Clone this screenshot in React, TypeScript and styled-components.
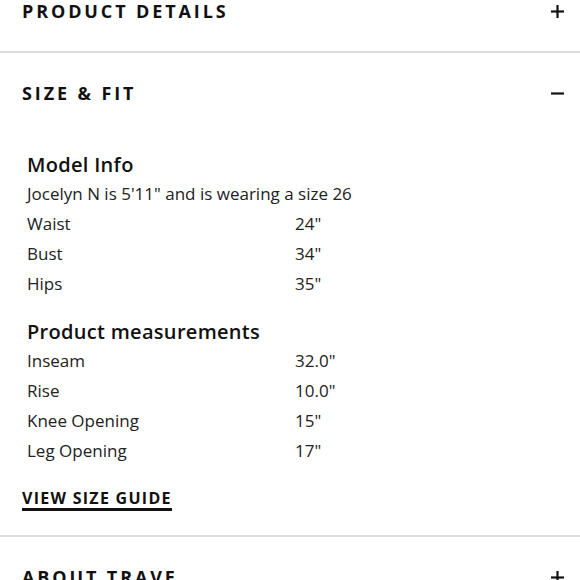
import React, { useState } from "react";
import styled, { createGlobalStyle } from "styled-components";

const GlobalStyle = createGlobalStyle`
  body {
    margin: 0;
    background: #ffffff;
    font-family: "Open Sans", "Liberation Sans", sans-serif;
    color: #111111;
  }
`;

type Row = { label: string; value: string };

const modelRows: Row[] = [
  { label: "Waist", value: "24\"" },
  { label: "Bust", value: "34\"" },
  { label: "Hips", value: "35\"" },
];

const productRows: Row[] = [
  { label: "Inseam", value: "32.0\"" },
  { label: "Rise", value: "10.0\"" },
  { label: "Knee Opening", value: "15\"" },
  { label: "Leg Opening", value: "17\"" },
];

const ToggleIcon: React.FC<{ open: boolean }> = ({ open }) => (
  <svg width="13" height="13" viewBox="0 0 13 13" aria-hidden="true">
    <line x1="0" y1="6.5" x2="13" y2="6.5" stroke="#111" strokeWidth="2.2" />
    {!open && (
      <line x1="6.5" y1="0" x2="6.5" y2="13" stroke="#111" strokeWidth="2.2" />
    )}
  </svg>
);

const App: React.FC = () => {
  const [openSection, setOpenSection] = useState<string>("size");

  const toggle = (key: string) =>
    setOpenSection((prev) => (prev === key ? "" : key));

  return (
    <>
      <GlobalStyle />
      <Accordion>
        <Section $first>
          <Header onClick={() => toggle("details")}>
            <Title>Product Details</Title>
            <ToggleIcon open={openSection === "details"} />
          </Header>
        </Section>

        <Section>
          <Header onClick={() => toggle("size")}>
            <Title>Size &amp; Fit</Title>
            <ToggleIcon open={openSection === "size"} />
          </Header>
          {openSection === "size" && (
            <Body>
              <Group>
                <GroupTitle>Model Info</GroupTitle>
                <Note>Jocelyn N is 5'11" and is wearing a size 26</Note>
                <Table>
                  {modelRows.map((r) => (
                    <React.Fragment key={r.label}>
                      <Cell>{r.label}</Cell>
                      <Cell>{r.value}</Cell>
                    </React.Fragment>
                  ))}
                </Table>
              </Group>

              <Group $spaced>
                <GroupTitle>Product measurements</GroupTitle>
                <Table>
                  {productRows.map((r) => (
                    <React.Fragment key={r.label}>
                      <Cell>{r.label}</Cell>
                      <Cell>{r.value}</Cell>
                    </React.Fragment>
                  ))}
                </Table>
              </Group>

              <GuideLink href="#">View Size Guide</GuideLink>
            </Body>
          )}
        </Section>

        <Section>
          <Header onClick={() => toggle("about")}>
            <Title>About Trave</Title>
            <ToggleIcon open={openSection === "about"} />
          </Header>
        </Section>
      </Accordion>
    </>
  );
};

const Accordion = styled.div`
  display: flex;
  flex-direction: column;
  width: 580px;
  height: 580px;
  overflow: hidden;
`;

const Section = styled.div<{ $first?: boolean }>`
  display: flex;
  flex-direction: column;
  border-top: ${(p) => (p.$first ? "none" : "2px solid #dddddd")};
  margin-top: ${(p) => (p.$first ? "-29px" : "0")};
  flex-shrink: 0;
`;

const Header = styled.div`
  display: flex;
  align-items: center;
  justify-content: space-between;
  height: 80px;
  padding: 0 16px 0 22px;
  cursor: pointer;
`;

const Title = styled.h3`
  margin: 0;
  font-size: 18px;
  font-weight: 700;
  text-transform: uppercase;
  letter-spacing: 0.16em;
  color: #111111;
`;

const Body = styled.div`
  display: flex;
  flex-direction: column;
  align-items: flex-start;
  padding: 18px 22px 24px;
`;

const Group = styled.div<{ $spaced?: boolean }>`
  display: flex;
  flex-direction: column;
  padding-left: 5px;
  margin-top: ${(p) => (p.$spaced ? "19px" : "0")};
`;

const GroupTitle = styled.h4`
  margin: 0;
  font-size: 20px;
  line-height: 28px;
  font-weight: 600;
  letter-spacing: 0.3px;
  color: #111111;
`;

const Note = styled.div`
  font-size: 17px;
  line-height: 30px;
  color: #222222;
`;

const Table = styled.div`
  display: grid;
  grid-template-columns: 268px 1fr;
  font-size: 17px;
  line-height: 30px;
  color: #222222;
`;

const Cell = styled.div``;

const GuideLink = styled.a`
  margin-top: 22px;
  font-size: 16px;
  line-height: 20px;
  font-weight: 700;
  letter-spacing: 0.08em;
  text-transform: uppercase;
  color: #111111;
  text-decoration: none;
  border-bottom: 3px solid #111111;
`;

export default App;
